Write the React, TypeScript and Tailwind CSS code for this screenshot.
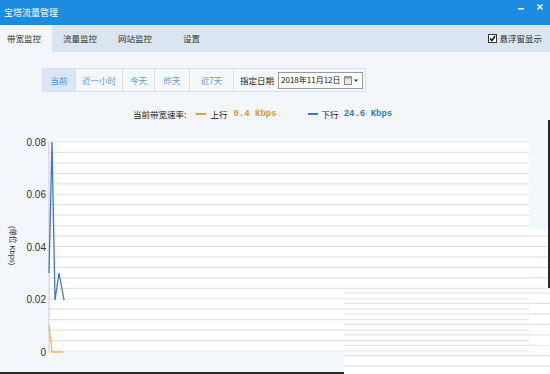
import React from "react";

const gridYs = Array.from({ length: 21 }, (_, i) => 22 + i * 10.45);

function Chart() {
  return (
    <svg width="550" height="254" viewBox="0 0 550 254" className="block">
      {/* main plot area */}
      <rect x="49" y="22" width="480" height="210" fill="#ffffff" />
      {/* patch A */}
      <rect x="310" y="110" width="238" height="60" fill="#ffffff" />
      {/* patch B */}
      <rect x="344" y="170" width="206" height="84" fill="#ffffff" />
      {gridYs.map((y, i) => (
        <line key={i} x1="49" x2="529" y1={y} y2={y} stroke="#e3e3e3" strokeWidth="1.2" />
      ))}
      {gridYs
        .filter((y) => y >= 110 && y < 170)
        .map((y, i) => (
          <line key={"a" + i} x1="529" x2="548" y1={y} y2={y} stroke="#e3e3e3" strokeWidth="1.2" />
        ))}
      {Array.from({ length: 8 }, (_, i) => 173 + i * 10.45).map((y, i) => (
        <line key={"b" + i} x1="344" x2="550" y1={y} y2={y} stroke="#e3e3e3" strokeWidth="1.2" />
      ))}
      {/* axis line */}
      <line x1="49" x2="49" y1="22" y2="232" stroke="#cfc6dc" strokeWidth="1" />
      {/* series */}
      <polyline points="49,205 52,232 63,232" fill="none" stroke="#f2b260" strokeWidth="1.3" />
      <polyline points="49,153 52,22 55,180 59,153 64,180" fill="none" stroke="#3b78c4" strokeWidth="1.3" />
      {/* y labels */}
      {[
        ["0.08", 22],
        ["0.06", 74],
        ["0.04", 127],
        ["0.02", 179],
        ["0", 232],
      ].map(([t, y]) => (
        <text
          key={t as string}
          x="46"
          y={(y as number) + 3.5}
          textAnchor="end"
          fontSize="10"
          fontFamily="Liberation Sans, Arial, sans-serif"
          fill="#333"
        >
          {t}
        </text>
      ))}
      <text
        transform="translate(10,106) rotate(90)"
        fontSize="7.5"
        fontFamily="Liberation Sans, 'Noto Sans CJK SC', sans-serif"
        fill="#333"
      >
        (单位 Kbps)
      </text>
      {/* window borders */}
      <rect x="548" y="0" width="2" height="168" fill="#2a2a2a" />
      <rect x="0" y="252" width="344" height="2" fill="#2a2a2a" />
    </svg>
  );
}

export default function App() {
  const cjk = "font-['Noto_Sans_CJK_SC','Noto_Sans',sans-serif]";
  return (
    <div className={`w-[550px] h-[374px] flex flex-col overflow-hidden ${cjk} text-[#333]`}>
      <div className="h-[25px] bg-[#1b8ce0] flex items-center justify-between pl-[4px] pr-[7px]">
        <span className="text-white text-[9px] leading-none">宝塔流量管理</span>
        <div className="flex items-start gap-[13px] self-start pt-[4px]">
          <svg width="6" height="6" viewBox="0 0 6 6">
            <rect x="0" y="4" width="6" height="1.5" fill="#fff" />
          </svg>
          <svg width="6" height="6" viewBox="0 0 6 6">
            <path d="M0.5 0.5 L5.5 5.5 M5.5 0.5 L0.5 5.5" stroke="#fff" strokeWidth="1.4" />
          </svg>
        </div>
      </div>
      <div className="h-[27px] bg-[#dbe5f0] flex items-stretch text-[8.5px]">
        <div className="w-[52px] pl-[7px] bg-[#f3f7fb] flex items-center">带宽监控</div>
        <div className="w-[55px] pl-[11px] flex items-center">流量监控</div>
        <div className="w-[65px] pl-[11px] flex items-center">网站监控</div>
        <div className="w-[60px] pl-[11px] flex items-center">设置</div>
        <div className="flex-1 flex items-center justify-end pr-[8px] gap-[2px]">
          <span className="w-[9px] h-[9px] border border-[#333] bg-white flex items-center justify-center">
            <svg width="7" height="7" viewBox="0 0 7 7">
              <path d="M1 3.5 L3 5.5 L6 1" fill="none" stroke="#111" strokeWidth="1.5" />
            </svg>
          </span>
          <span>悬浮窗显示</span>
        </div>
      </div>
      <div className="flex-1 bg-[#f3f7fb] flex flex-col">
        <div className="mt-[16px] ml-[42px] w-[324px] h-[24px] border border-[#d8e2ec] bg-[#f6f9fc] flex items-stretch text-[8.5px]">
          <div className="w-[33px] bg-[#d9e7f5] text-[#4c93d6] flex items-center justify-center border-r border-[#d8e2ec]">当前</div>
          <div className="w-[47px] text-[#5b9fd8] flex items-center justify-center border-r border-[#d8e2ec]">近一小时</div>
          <div className="w-[32px] text-[#5b9fd8] flex items-center justify-center border-r border-[#d8e2ec]">今天</div>
          <div className="w-[35px] text-[#5b9fd8] flex items-center justify-center border-r border-[#d8e2ec]">昨天</div>
          <div className="w-[44px] text-[#5b9fd8] flex items-center justify-center border-r border-[#d8e2ec]">近7天</div>
          <div className="flex-1 flex items-center pl-[6px] gap-[4px]">
            <span className="text-[#222]">指定日期</span>
            <div className="w-[85px] h-[17px] border border-[#9a9a9a] bg-white flex items-center pl-[2px] pr-[3px] text-[8px] text-[#111]">
              <span className="flex-1">2018年11月12日</span>
              <svg width="15" height="9" viewBox="0 0 15 9">
                <rect x="0.5" y="0.5" width="7" height="8" fill="#e8e8e8" stroke="#888" />
                <rect x="0.5" y="0.5" width="7" height="2" fill="#9a9a9a" />
                <path d="M10 3.5 L14 3.5 L12 6 Z" fill="#333" />
              </svg>
            </div>
          </div>
        </div>
        <div className="mt-[16px] h-[12px] pl-[133px] flex items-center text-[8.5px] leading-none">
          <span className="text-[#222]">当前带宽速率:</span>
          <span className="ml-[10px] w-[10px] h-[2px] bg-[#f0a030]" />
          <span className="ml-[4px] text-[#222]">上行</span>
          <span className="ml-[6px] font-['Liberation_Mono',monospace] font-bold text-[9px] text-[#e9952a] whitespace-pre">0.4 Kbps</span>
          <span className="ml-[31px] w-[10px] h-[2px] bg-[#2f7fca]" />
          <span className="ml-[4px] text-[#222]">下行</span>
          <span className="ml-[5px] font-['Liberation_Mono',monospace] font-bold text-[9px] text-[#2f7fca] whitespace-pre">24.6 Kbps</span>
        </div>
        <Chart />
      </div>
    </div>
  );
}
